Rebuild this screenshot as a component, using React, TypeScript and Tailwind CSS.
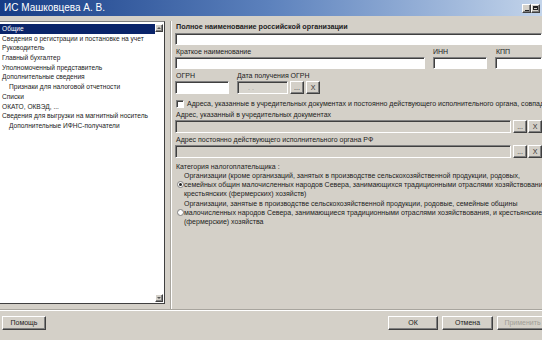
import React from 'react';

const items = [
  { t: 'Общие', sel: true },
  { t: 'Сведения о регистрации и постановке на учет' },
  { t: 'Руководитель' },
  { t: 'Главный бухгалтер' },
  { t: 'Уполномоченный представитель' },
  { t: 'Дополнительные сведения' },
  { t: 'Признаки для налоговой отчетности', indent: true },
  { t: 'Списки' },
  { t: 'ОКАТО, ОКВЭД, ...' },
  { t: 'Сведения для выгрузки на магнитный носитель' },
  { t: 'Дополнительные ИФНС-получатели', indent: true },
];

const sunken =
  'box-border border border-t-[#808080] border-l-[#808080] border-b-white border-r-white shadow-[inset_1px_1px_0_#404040]';
const raised =
  'box-border border border-t-white border-l-white border-b-[#404040] border-r-[#404040] shadow-[inset_-1px_-1px_0_#808080] bg-[#d4d0c8]';

const Field = ({ w, h = 'h-[12px]', disabled }: { w: string; h?: string; disabled?: boolean }) => (
  <div className={`${sunken} ${w} ${h} ${disabled ? 'bg-[#d4d0c8]' : 'bg-white'}`} />
);

const SmallBtn = ({ label }: { label: string }) => (
  <div className={`${raised} w-[14px] h-[13px] flex items-center justify-center text-[7px] leading-none text-[#333]`}>
    {label}
  </div>
);

const Radio = ({ checked }: { checked?: boolean }) => (
  <div className="w-[7px] h-[7px] rounded-full border border-[#808080] bg-white flex items-center justify-center shrink-0">
    {checked && <div className="w-[3px] h-[3px] rounded-full bg-[#222]" />}
  </div>
);

export default function App() {
  return (
    <div className="w-[542px] h-[340px] overflow-hidden bg-[#d4d0c8] flex flex-col font-['Liberation_Sans',Arial,sans-serif] text-[#222]">
      {/* title bar */}
      <div className="h-[16px] shrink-0 flex items-center bg-gradient-to-r from-[#163c86] via-[#5d82bd] to-[#c3d4ea] pl-[4px] pr-[2px]">
        <span className="text-white text-[10px] leading-none">ИС Машковцева А. В.</span>
        <div className="flex-1" />
        <div className="flex">
          <div className={`${raised} w-[9px] h-[9px] flex items-end justify-center pb-[1px]`}>
            <div className="w-[4px] h-[1px] bg-[#222]" />
          </div>
          <div className={`${raised} w-[9px] h-[9px] flex items-center justify-center`}>
            <div className="w-[5px] h-[4px] border border-t-2 border-[#222]" />
          </div>
        </div>
      </div>

      {/* main */}
      <div className="flex h-[293px] shrink-0">
        {/* tree list */}
        <div className="w-[165px] mt-[5px] h-[283px] bg-white border-r border-b border-r-[#404040] border-b-[#404040] border-t border-t-[#808080] flex">
          <div className="flex-1 pt-[2px] text-[6.6px] leading-[9.7px] whitespace-nowrap overflow-hidden">
            {items.map((it) => (
              <div
                key={it.t}
                className={`h-[9.7px] ${it.indent ? 'pl-[9px]' : 'pl-[2px]'} ${it.sel ? 'bg-[#0a246a] text-white' : ''}`}
              >
                {it.t}
              </div>
            ))}
          </div>
          <div className="w-[9px] flex flex-col justify-between pt-[2px] pb-[1px] pr-[1px]">
            <div className={`${raised} w-[8px] h-[8px] flex items-center justify-center`}>
              <div className="w-0 h-0 border-l-[2px] border-r-[2px] border-b-[2px] border-l-transparent border-r-transparent border-b-[#555]" />
            </div>
            <div className={`${raised} w-[8px] h-[8px] flex items-center justify-center`}>
              <div className="w-0 h-0 border-l-[2px] border-r-[2px] border-t-[2px] border-l-transparent border-r-transparent border-t-[#555]" />
            </div>
          </div>
        </div>

        {/* splitter */}
        <div className="w-[5px]" />
        <div className="w-[2px] h-[288px] mt-[5px] border-l border-l-[#a8a59e] border-r border-r-white" />

        {/* form */}
        <div className="flex-1 pl-[3px] flex flex-col text-[7px] leading-[9px] whitespace-nowrap overflow-hidden">
          <div className="mt-[6px] h-[9px] pl-[1px] font-bold text-[7.2px]">Полное наименование российской организации</div>
          <div className="mt-[2px]">
            <Field w="w-full" />
          </div>

          <div className="mt-[2px] flex h-[9px]">
            <div className="w-[258px] pl-[1px]">Краткое наименование</div>
            <div className="w-[62px]">ИНН</div>
            <div className="pl-[1px]">КПП</div>
          </div>
          <div className="mt-[1px] flex">
            <Field w="w-[250px]" />
            <div className="w-[8px]" />
            <Field w="w-[54px]" />
            <div className="w-[8px]" />
            <Field w="flex-1" />
          </div>

          <div className="mt-[2px] flex h-[9px]">
            <div className="w-[62px] pl-[1px]">ОГРН</div>
            <div>Дата получения ОГРН</div>
          </div>
          <div className="mt-[1px] flex items-center">
            <Field w="w-[54px]" h="h-[13px]" />
            <div className="w-[8px]" />
            <div className={`${sunken} w-[51px] h-[13px] bg-[#d8d5ce] text-[#999] pl-[10px] leading-[11px]`}>. .</div>
            <div className="w-[2px]" />
            <SmallBtn label="..." />
            <div className="w-[2px]" />
            <SmallBtn label="X" />
          </div>

          <div className="mt-[5px] flex items-center h-[9px]">
            <div className={`${sunken} w-[8px] h-[8px] bg-white ml-[1px] shrink-0`} />
            <div className="pl-[3px]">
              Адреса, указанные в учредительных документах и постоянно действующего исполнительного органа, совпадают
            </div>
          </div>

          <div className="mt-[2px] h-[9px] pl-[1px]">Адрес, указанный в учредительных документах</div>
          <div className="mt-[1px] flex items-center">
            <Field w="w-[337px]" h="h-[13px]" disabled />
            <div className="w-[2px]" />
            <SmallBtn label="..." />
            <div className="w-[1px]" />
            <SmallBtn label="X" />
          </div>

          <div className="mt-[2px] h-[9px] pl-[1px]">Адрес постоянно действующего исполнительного органа РФ</div>
          <div className="mt-[1px] flex items-center">
            <Field w="w-[337px]" h="h-[13px]" disabled />
            <div className="w-[2px]" />
            <SmallBtn label="..." />
            <div className="w-[1px]" />
            <SmallBtn label="X" />
          </div>

          <div className="mt-[4px] h-[9px] pl-[1px]">Категория налогоплательщика :</div>

          <div className="flex items-center">
            <div className="w-[13px] pl-[2px]">
              <Radio checked />
            </div>
            <div>
              <div>Организации (кроме организаций, занятых в производстве сельскохозяйственной продукции, родовых,</div>
              <div>семейных общин малочисленных народов Севера, занимающихся традиционными отраслями хозяйствования, и</div>
              <div>крестьянских (фермерских) хозяйств)</div>
            </div>
          </div>

          <div className="mt-[1px] flex items-center">
            <div className="w-[13px] pl-[2px]">
              <Radio />
            </div>
            <div>
              <div>Организации, занятые в производстве сельскохозяйственной продукции, родовые, семейные общины</div>
              <div>малочисленных народов Севера, занимающиеся традиционными отраслями хозяйствования, и крестьянские</div>
              <div>(фермерские) хозяйства</div>
            </div>
          </div>
        </div>
      </div>

      {/* separator */}
      <div className="h-[2px] shrink-0 border-t border-t-[#a8a59e] border-b border-b-white" />

      {/* buttons */}
      <div className="flex items-center mt-[5px] pl-[2px] text-[7px]">
        <div className={`${raised} w-[44px] h-[14px] flex items-center justify-center`}>Помощь</div>
        <div className="flex-1" />
        <div className={`${raised} w-[50px] h-[14px] flex items-center justify-center`}>ОК</div>
        <div className="w-[4px]" />
        <div className={`${raised} w-[51px] h-[14px] flex items-center justify-center`}>Отмена</div>
        <div className="w-[4px]" />
        <div className={`${raised} w-[51px] h-[14px] flex items-center justify-center text-[#a09d96] mr-[-6px]`}>
          Применить
        </div>
      </div>
    </div>
  );
}
